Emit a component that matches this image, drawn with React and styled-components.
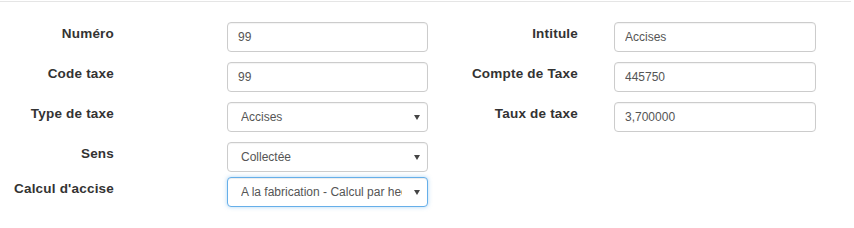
import styled, { createGlobalStyle } from "styled-components";

const GlobalStyle = createGlobalStyle`
  body {
    margin: 0;
    background: #ffffff;
    font-family: "Liberation Sans", Arial, sans-serif;
  }
`;

const leftRows = [
  { label: "Numéro", value: "99" },
  { label: "Code taxe", value: "99" },
  { label: "Type de taxe", value: "Accises", select: true },
  { label: "Sens", value: "Collectée", select: true, gap: 5 },
  {
    label: "Calcul d'accise",
    value: "A la fabrication - Calcul par hectolitre",
    select: true,
    focused: true,
  },
];

const rightRows = [
  { label: "Intitule", value: "Accises" },
  { label: "Compte de Taxe", value: "445750" },
  { label: "Taux de taxe", value: "3,700000" },
];

export default function App() {
  return (
    <>
      <GlobalStyle />
      <Page>
        <Divider />
        <Form>
          <Column>
            {leftRows.map((r) => (
              <Row key={r.label} $gap={r.gap}>
                <Label $width={114} $space={113}>
                  {r.label}
                </Label>
                <Field $width={201} row={r} />
              </Row>
            ))}
          </Column>
          <Column>
            {rightRows.map((r) => (
              <Row key={r.label} $gap={r.gap}>
                <Label $width={150} $space={36}>
                  {r.label}
                </Label>
                <Field $width={202} row={r} />
              </Row>
            ))}
          </Column>
        </Form>
      </Page>
    </>
  );
}

function Field({ row, $width }) {
  if (row.select) {
    return (
      <SelectWrap $width={$width}>
        <Select defaultValue={row.value} $focused={row.focused}>
          <option>{row.value}</option>
        </Select>
        <Arrow width="6" height="5" viewBox="0 0 6 5">
          <path d="M0 0 H6 L3 5 Z" fill="#444" />
        </Arrow>
      </SelectWrap>
    );
  }
  return <TextInput $width={$width} defaultValue={row.value} />;
}

const Page = styled.div`
  width: 854px;
  height: 228px;
  padding-top: 1px;
  box-sizing: border-box;
`;

const Divider = styled.div`
  width: 851px;
  height: 1px;
  background: #e5e5e5;
`;

const Form = styled.div`
  display: flex;
  padding-top: 20px;
`;

const Column = styled.div`
  display: flex;
  flex-direction: column;
`;

const Row = styled.div`
  display: flex;
  align-items: flex-start;
  margin-bottom: ${(p) => (p.$gap !== undefined ? p.$gap : 10)}px;
`;

const Label = styled.div`
  width: ${(p) => p.$width}px;
  margin-right: ${(p) => p.$space}px;
  padding-top: 4px;
  text-align: right;
  font-size: 13.5px;
  letter-spacing: 0.2px;
  line-height: 15px;
  font-weight: bold;
  color: #333333;
  white-space: nowrap;
`;

const TextInput = styled.input`
  width: ${(p) => p.$width}px;
  height: 30px;
  box-sizing: border-box;
  padding: 0 10px;
  border: 1px solid #cccccc;
  border-radius: 4px;
  font-family: "Liberation Sans", Arial, sans-serif;
  font-size: 12px;
  color: #555555;
  background: #ffffff;
  box-shadow: inset 0 1px 1px rgba(0, 0, 0, 0.05);
  outline: none;
`;

const SelectWrap = styled.div`
  position: relative;
  width: ${(p) => p.$width}px;
  height: 30px;
`;

const Select = styled.select`
  appearance: none;
  width: 100%;
  height: 30px;
  box-sizing: border-box;
  padding: 0 25px 0 13px;
  border: 1px solid ${(p) => (p.$focused ? "#66afe9" : "#cccccc")};
  border-radius: 4px;
  font-family: "Liberation Sans", Arial, sans-serif;
  font-size: 12px;
  color: #555555;
  background: #ffffff;
  box-shadow: ${(p) =>
    p.$focused
      ? "inset 0 1px 1px rgba(0,0,0,.075), 0 0 4px rgba(102,175,233,.5)"
      : "inset 0 1px 1px rgba(0,0,0,.05)"};
  outline: none;
`;

const Arrow = styled.svg`
  position: absolute;
  right: 8px;
  top: 13px;
  pointer-events: none;
`;
